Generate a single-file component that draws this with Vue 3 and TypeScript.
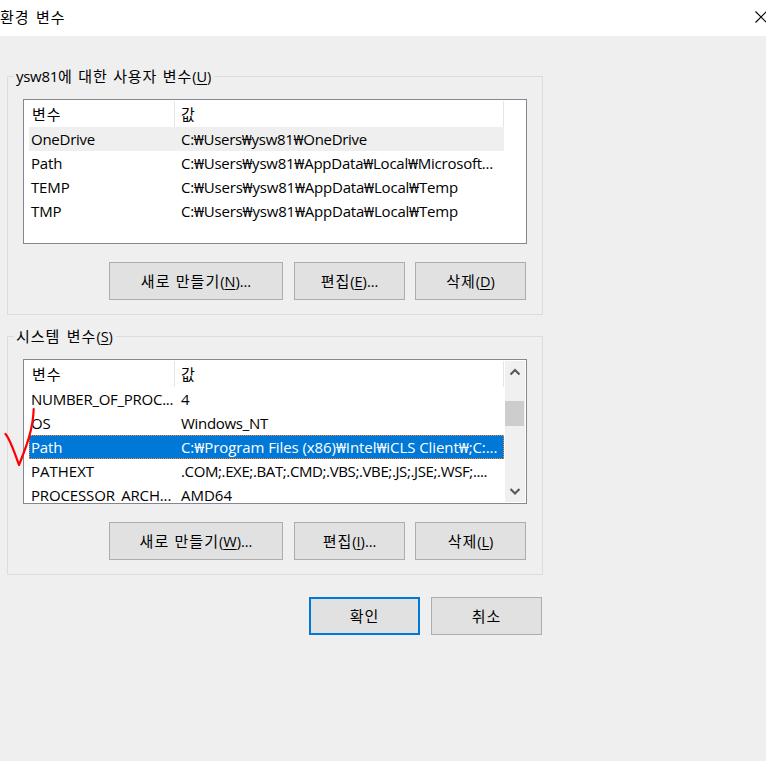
<script setup lang="ts">
interface Row {
  name: string
  value: string
  nameTrack: number
  valueTrack: number
  state?: 'hot' | 'selected'
}
interface Action {
  label: string
  key: string
  more: boolean
  wide?: boolean
}
interface Group {
  id: string
  title: string
  key: string
  rows: Row[]
  actions: Action[]
  scroll: boolean
}

const groups: Group[] = [
  {
    id: 'user',
    title: '에 대한 사용자 변수',
    key: 'U',
    scroll: false,
    rows: [
      { name: 'OneDrive', value: 'C:₩Users₩ysw81₩OneDrive', nameTrack: -0.25, valueTrack: -0.3, state: 'hot' },
      { name: 'Path', value: 'C:₩Users₩ysw81₩AppData₩Local₩Microsoft...', nameTrack: -0.15, valueTrack: -0.24 },
      { name: 'TEMP', value: 'C:₩Users₩ysw81₩AppData₩Local₩Temp', nameTrack: -0.15, valueTrack: -0.2 },
      { name: 'TMP', value: 'C:₩Users₩ysw81₩AppData₩Local₩Temp', nameTrack: -0.1, valueTrack: -0.2 },
    ],
    actions: [
      { label: '새로 만들기', key: 'N', more: true, wide: true },
      { label: '편집', key: 'E', more: true },
      { label: '삭제', key: 'D', more: false },
    ],
  },
  {
    id: 'system',
    title: '시스템 변수',
    key: 'S',
    scroll: true,
    rows: [
      { name: 'NUMBER_OF_PROC...', value: '4', nameTrack: -0.27, valueTrack: 0 },
      { name: 'OS', value: 'Windows_NT', nameTrack: -0.1, valueTrack: -0.3 },
      { name: 'Path', value: 'C:₩Program Files (x86)₩Intel₩iCLS Client₩;C:...', nameTrack: -0.15, valueTrack: -0.08, state: 'selected' },
      { name: 'PATHEXT', value: '.COM;.EXE;.BAT;.CMD;.VBS;.VBE;.JS;.JSE;.WSF;....', nameTrack: 0, valueTrack: -0.38 },
      { name: 'PROCESSOR_ARCH...', value: 'AMD64', nameTrack: -0.15, valueTrack: 0 },
    ],
    actions: [
      { label: '새로 만들기', key: 'W', more: true, wide: true },
      { label: '편집', key: 'I', more: true },
      { label: '삭제', key: 'L', more: false },
    ],
  },
]
</script>

<template>
  <div class="dialog">
    <header class="titlebar">
      <span class="ko">환경 변수</span>
      <svg class="close" width="12" height="12" viewBox="0 0 12 12"><path d="M0.5 0.5L11.5 11.5M11.5 0.5L0.5 11.5" /></svg>
    </header>
    <main class="content">
      <section v-for="g in groups" :key="g.id" class="group" :class="g.id">
        <h2 class="legend"><span v-if="g.id === 'user'" class="account">ysw81</span><span class="ko">{{ g.title }}</span><span class="key">(<u>{{ g.key }}</u>)</span></h2>
        <div class="list">
          <div class="table">
            <div class="row head"><span class="cell ko">변수</span><span class="cell ko">값</span></div>
            <div v-for="r in g.rows" :key="r.name" class="row" :class="r.state">
              <span class="cell" :style="{ letterSpacing: r.nameTrack + 'px' }">{{ r.name }}</span><span class="cell" :style="{ letterSpacing: r.valueTrack + 'px' }">{{ r.value }}</span>
            </div>
          </div>
          <div v-if="g.scroll" class="scrollbar">
            <svg class="arrow" width="10" height="8" viewBox="0 0 10 8"><path d="M0.5 6.5L5 2L9.5 6.5" /></svg>
            <div class="thumb"></div>
            <svg class="arrow down" width="10" height="8" viewBox="0 0 10 8"><path d="M0.5 1L5 5.5L9.5 1" /></svg>
          </div>
        </div>
        <div class="actions">
          <button v-for="a in g.actions" :key="a.key" :class="{ wide: a.wide }"><span class="ko">{{ a.label }}</span><span class="key">(<u>{{ a.key }}</u>)<template v-if="a.more">...</template></span></button>
        </div>
        <svg v-if="g.scroll" class="check" width="34" height="64" viewBox="0 0 34 64"><path d="M1.5 29C6 34 10 46 15 60C20 47 29 27 29.7 4" /></svg>
      </section>
      <footer class="footer">
        <button class="primary"><span class="ko">확인</span></button>
        <button><span class="ko">취소</span></button>
      </footer>
    </main>
  </div>
</template>

<style>
body {
  margin: 0;
  background: #efefef;
}
</style>

<style scoped>
.dialog {
  box-sizing: border-box;
  height: 761px;
  overflow: hidden;
  background: #efefef;
  color: #000;
  font: 15px/24px "Open Sans", "Noto Sans", "Noto Sans CJK KR", sans-serif;
  letter-spacing: -0.3px;
}
.ko {
  font-family: "Noto Sans CJK KR", sans-serif;
  font-size: 15px;
  font-weight: 400;
  letter-spacing: 1px;
  word-spacing: 2px;
}
.titlebar {
  display: flex;
  justify-content: space-between;
  align-items: center;
  box-sizing: border-box;
  height: 36px;
  padding-bottom: 2px;
  background: #fff;
}
.close {
  flex: none;
  margin-right: -1px;
  stroke: #000;
  stroke-width: 1.1;
}
.content {
  display: flex;
  flex-direction: column;
  gap: 21px;
  width: 536px;
  padding: 40px 0 0 7px;
}
.group {
  position: relative;
  box-sizing: border-box;
  height: 239px;
  padding: 0 16px 0 15px;
  border: 1px solid #dcdcdc;
}
.legend {
  width: max-content;
  height: 24px;
  margin: -13px 0 0 -9px;
  padding: 0 3px 0 2px;
  background: #efefef;
  font-size: 15px;
  font-weight: 400;
  white-space: nowrap;
}
.user .legend .ko {
  letter-spacing: 0.9px;
  word-spacing: 1.3px;
}
.list {
  display: flex;
  justify-content: space-between;
  box-sizing: border-box;
  width: 504px;
  height: 145px;
  margin-top: 11px;
  border: 1px solid #828790;
  background: #fff;
  overflow: hidden;
}
.table {
  width: 475px;
  height: 141px;
  margin-left: 5px;
  overflow: hidden;
}
.row {
  display: grid;
  grid-template-columns: 146px 329px;
  height: 24px;
}
.cell {
  padding-left: 2px;
  white-space: nowrap;
}
.cell + .cell {
  padding-left: 6px;
}
.head {
  height: 26px;
  margin: 1px 0 0;
}
.head .cell {
  box-sizing: border-box;
  border-right: 1px solid #e5e5e5;
  padding-left: 3px;
  line-height: 25px;
}
.head .cell + .cell {
  padding-left: 6px;
}
.hot {
  background: #efefef;
}
.selected {
  background: #0078d7;
  color: #fff;
  outline: 1px dotted #ff8728;
  outline-offset: -1px;
}
.scrollbar {
  display: flex;
  flex-direction: column;
  align-items: flex-start;
  box-sizing: border-box;
  width: 20px;
  height: 141px;
  margin: 1px 1px 0 0;
  padding: 7px 0 6px;
  background: #f0f0f0;
}
.arrow {
  flex: none;
  margin-left: 5px;
  fill: none;
  stroke: #5a5a5a;
  stroke-width: 2.2;
}
.thumb {
  width: 19px;
  height: 25px;
  margin-top: 25px;
  background: #cdcdcd;
}
.down {
  margin-top: auto;
}
.actions {
  display: flex;
  justify-content: flex-end;
  gap: 10px;
  margin-top: 18px;
}
button {
  box-sizing: border-box;
  width: 111px;
  height: 38px;
  padding: 0;
  border: 1px solid #adadad;
  background: #e1e1e1;
  color: #000;
  font: inherit;
  letter-spacing: inherit;
  white-space: nowrap;
}
.wide {
  width: 174px;
  margin-right: 1px;
}
.wide .ko {
  word-spacing: 1px;
}
.key {
  font-size: 14.5px;
  letter-spacing: 0;
}
u {
  text-underline-offset: 2px;
  text-decoration-thickness: 1px;
}
.check {
  position: absolute;
  left: -4px;
  top: 68px;
  fill: none;
  stroke: #f00;
  stroke-width: 2.2;
  stroke-linejoin: round;
  stroke-linecap: round;
}
.footer {
  display: flex;
  justify-content: flex-end;
  gap: 11px;
  margin-top: 1px;
  padding-right: 1px;
}
.footer button {
  padding-bottom: 1px;
}
.primary {
  border: 2px solid #0078d7;
}
</style>
